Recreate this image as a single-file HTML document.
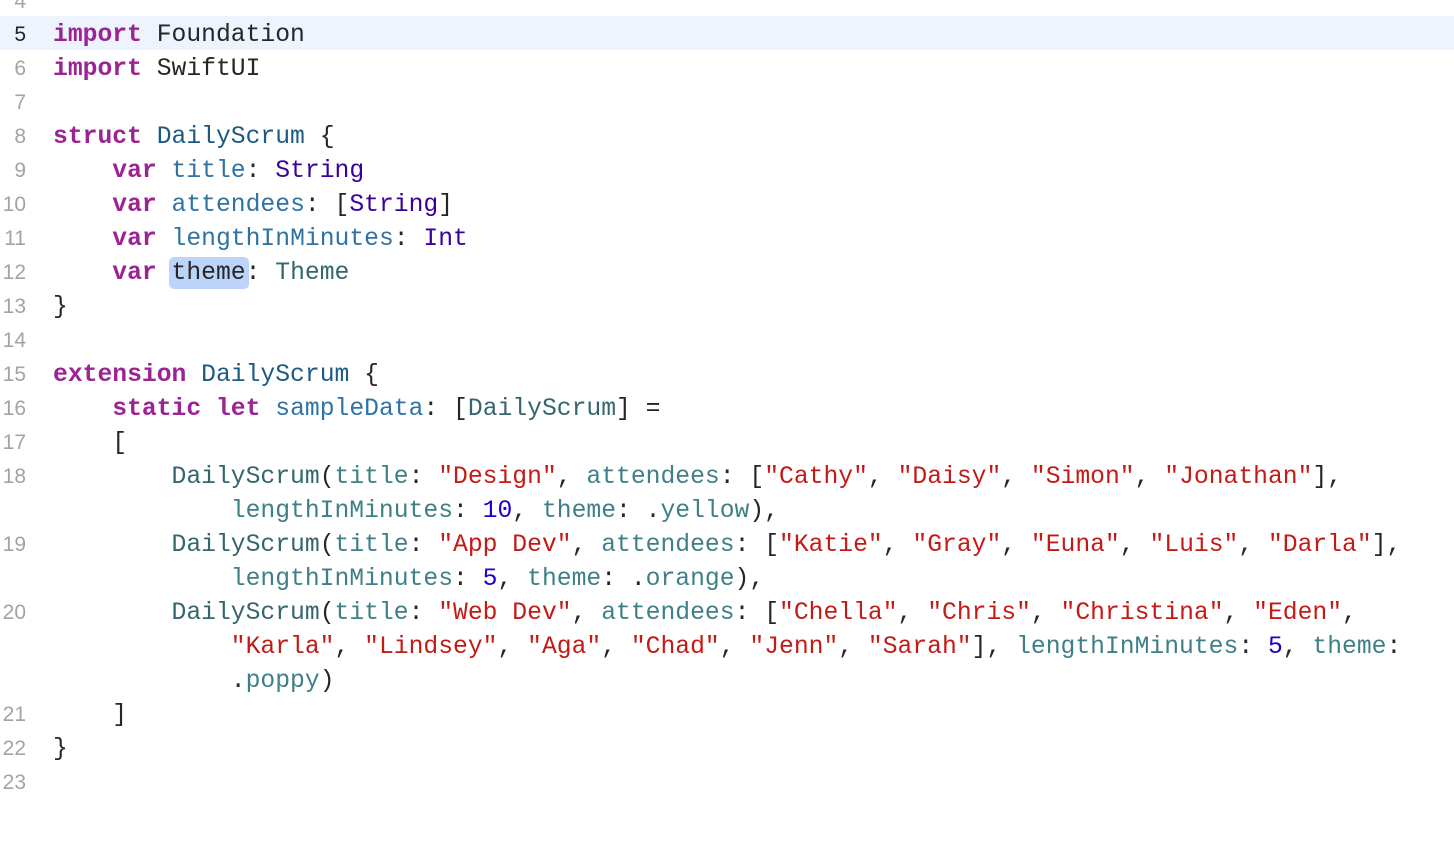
<!DOCTYPE html>
<html><head><meta charset="utf-8"><style>
body{margin:0;width:1454px;height:848px;background:#fff;overflow:hidden;position:relative;font-family:"Liberation Mono",monospace;}
.r{position:absolute;left:0;width:1454px;height:34px;line-height:34px;font-size:24.7px;white-space:pre;color:#262626}
.r .c,.r .n{top:2px}
.n{position:absolute;left:0;width:26px;text-align:right;font-family:"Liberation Sans",sans-serif;font-size:21px;color:#a3a3a3}
.c{position:absolute;left:53px}
.k{color:#9b2393;font-weight:bold}
.d{color:#1c5a82}
.p{color:#2e73a4}
.t{color:#3900a0}
.o{color:#33666e}
.a{color:#3e8087}
.s{color:#c41a16}
.m{color:#1c00cf}
.hl{background:#eef4fd}
.sel{background:#bcd4fa;border-radius:5px;padding:2px 3px;margin:0 -3px}
</style></head><body>
<div class="r" style="top:-17px"><span class="n">4</span></div>
<div class="r hl" style="top:16px"><span class="n" style="color:#222">5</span><span class="c"><span class="k">import</span> Foundation</span></div>
<div class="r" style="top:50px"><span class="n">6</span><span class="c"><span class="k">import</span> SwiftUI</span></div>
<div class="r" style="top:84px"><span class="n">7</span></div>
<div class="r" style="top:118px"><span class="n">8</span><span class="c"><span class="k">struct</span> <span class="d">DailyScrum</span> {</span></div>
<div class="r" style="top:152px"><span class="n">9</span><span class="c">    <span class="k">var</span> <span class="p">title</span>: <span class="t">String</span></span></div>
<div class="r" style="top:186px"><span class="n">10</span><span class="c">    <span class="k">var</span> <span class="p">attendees</span>: [<span class="t">String</span>]</span></div>
<div class="r" style="top:220px"><span class="n">11</span><span class="c">    <span class="k">var</span> <span class="p">lengthInMinutes</span>: <span class="t">Int</span></span></div>
<div class="r" style="top:254px"><span class="n">12</span><span class="c">    <span class="k">var</span> <span class="sel">theme</span>: <span class="o">Theme</span></span></div>
<div class="r" style="top:288px"><span class="n">13</span><span class="c">}</span></div>
<div class="r" style="top:322px"><span class="n">14</span></div>
<div class="r" style="top:356px"><span class="n">15</span><span class="c"><span class="k">extension</span> <span class="d">DailyScrum</span> {</span></div>
<div class="r" style="top:390px"><span class="n">16</span><span class="c">    <span class="k">static</span> <span class="k">let</span> <span class="p">sampleData</span>: [<span class="o">DailyScrum</span>] =</span></div>
<div class="r" style="top:424px"><span class="n">17</span><span class="c">    [</span></div>
<div class="r" style="top:458px"><span class="n">18</span><span class="c">        <span class="o">DailyScrum</span>(<span class="a">title</span>: <span class="s">"Design"</span>, <span class="a">attendees</span>: [<span class="s">"Cathy"</span>, <span class="s">"Daisy"</span>, <span class="s">"Simon"</span>, <span class="s">"Jonathan"</span>],</span></div>
<div class="r" style="top:492px"><span class="c">            <span class="a">lengthInMinutes</span>: <span class="m">10</span>, <span class="a">theme</span>: .<span class="a">yellow</span>),</span></div>
<div class="r" style="top:526px"><span class="n">19</span><span class="c">        <span class="o">DailyScrum</span>(<span class="a">title</span>: <span class="s">"App Dev"</span>, <span class="a">attendees</span>: [<span class="s">"Katie"</span>, <span class="s">"Gray"</span>, <span class="s">"Euna"</span>, <span class="s">"Luis"</span>, <span class="s">"Darla"</span>],</span></div>
<div class="r" style="top:560px"><span class="c">            <span class="a">lengthInMinutes</span>: <span class="m">5</span>, <span class="a">theme</span>: .<span class="a">orange</span>),</span></div>
<div class="r" style="top:594px"><span class="n">20</span><span class="c">        <span class="o">DailyScrum</span>(<span class="a">title</span>: <span class="s">"Web Dev"</span>, <span class="a">attendees</span>: [<span class="s">"Chella"</span>, <span class="s">"Chris"</span>, <span class="s">"Christina"</span>, <span class="s">"Eden"</span>,</span></div>
<div class="r" style="top:628px"><span class="c">            <span class="s">"Karla"</span>, <span class="s">"Lindsey"</span>, <span class="s">"Aga"</span>, <span class="s">"Chad"</span>, <span class="s">"Jenn"</span>, <span class="s">"Sarah"</span>], <span class="a">lengthInMinutes</span>: <span class="m">5</span>, <span class="a">theme</span>:</span></div>
<div class="r" style="top:662px"><span class="c">            .<span class="a">poppy</span>)</span></div>
<div class="r" style="top:696px"><span class="n">21</span><span class="c">    ]</span></div>
<div class="r" style="top:730px"><span class="n">22</span><span class="c">}</span></div>
<div class="r" style="top:764px"><span class="n">23</span></div>
</body></html>
